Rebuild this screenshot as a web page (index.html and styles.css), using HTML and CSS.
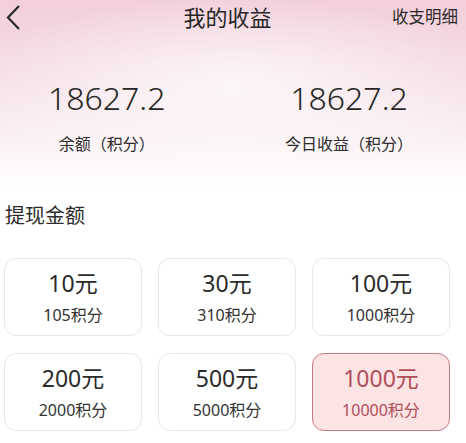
FILE: index.html
```html
<!DOCTYPE html>
<html>
<head>
    <meta charset="UTF-8">
    <title>我的收益</title>
    <link rel="stylesheet" href="styles.css">
</head>
<body>
    <div class="page">
        <div class="top">
            <div class="head">
                <a href="javascript:;" class="back">
                    <svg width="16" height="28" viewBox="0 0 16 28"><polyline points="14,3 3,14.5 14,26" fill="none" stroke="#2a2a2a" stroke-width="2.2"/></svg>
                </a>
                <h1 class="title">我的收益</h1>
                <a href="javascript:;" class="detail">收支明细</a>
            </div>
            <div class="sum">
                <div class="item">
                    <p class="num">18627.2</p>
                    <p class="lab">余额（积分）</p>
                </div>
                <div class="item">
                    <p class="num">18627.2</p>
                    <p class="lab">今日收益（积分）</p>
                </div>
            </div>
        </div>
        <h2 class="sub">提现金额</h2>
        <ul class="cards">
            <li><b>10元</b><span>105积分</span></li>
            <li><b>30元</b><span>310积分</span></li>
            <li><b>100元</b><span>1000积分</span></li>
            <li><b>200元</b><span>2000积分</span></li>
            <li><b>500元</b><span>5000积分</span></li>
            <li class="active"><b>1000元</b><span>10000积分</span></li>
        </ul>
    </div>
</body>
</html>
```
FILE: styles.css
```css
*{margin: 0;padding: 0;list-style: none;}
body{
    font-family: "Noto Sans", "Noto Sans CJK SC", sans-serif;
    color: #2b2b2b;
    background: #fff;
}
.page{
    width: 466px;
    height: 443px;
    overflow: hidden;
}
.top{
    height: 190px;
    background:
        radial-gradient(ellipse 260px 90px at 50% 45%, rgba(255,255,255,.7), rgba(255,255,255,0)),
        linear-gradient(to bottom, #f2cfda 0%, #f6e1e8 45%, #fcf5f7 80%, #fff 100%);
}
.head{
    height: 32px;
    display: flex;
    align-items: center;
    justify-content: space-between;
    padding: 0 8px 0 5px;
}
.back{
    display: block;
    width: 16px;
    height: 28px;
    margin-top: 2px;
}
.back svg{display: block;}
.title{
    font-size: 22px;
    font-weight: normal;
    color: #262626;
    margin-left: 42px;
    font-family: "Noto Sans CJK SC", sans-serif;
}
.detail{
    font-size: 16.5px;
    color: #2b2b2b;
    text-decoration: none;
    font-family: "Noto Sans CJK SC", sans-serif;
}
.sum{
    display: flex;
    justify-content: space-between;
    padding: 46px 53px 0 48px;
}
.item{
    text-align: center;
}
.num{
    font-size: 32px;
    font-weight: 300;
    line-height: 40px;
    color: #262626;
}
.lab{
    margin-top: 14px;
    font-size: 16px;
    line-height: 22px;
    color: #2b2b2b;
    font-family: "Noto Sans CJK SC", sans-serif;
}
.sub{
    font-size: 20px;
    font-weight: normal;
    line-height: 26px;
    margin: 12px 0 0 5px;
    color: #2b2b2b;
    font-family: "Noto Sans CJK SC", sans-serif;
}
.cards{
    display: grid;
    grid-template-columns: repeat(3, 138px);
    column-gap: 16px;
    row-gap: 17px;
    padding: 30px 0 0 4px;
}
.cards li{
    height: 78px;
    box-sizing: border-box;
    border: 1px solid #e6e6e6;
    border-radius: 12px;
    background: #fff;
    display: flex;
    flex-direction: column;
    align-items: center;
    justify-content: center;
    font-family: "Noto Sans", "Noto Sans CJK SC", sans-serif;
}
.cards b{
    font-weight: normal;
    font-size: 23px;
    line-height: 28px;
    color: #2b2b2b;
}
.cards span{
    margin-top: 8px;
    font-size: 16px;
    line-height: 20px;
    color: #333;
}
.cards .active{
    background: #fce3e4;
    border-color: #c57b80;
}
.cards .active b,.cards .active span{
    color: #b04e5a;
}
```
